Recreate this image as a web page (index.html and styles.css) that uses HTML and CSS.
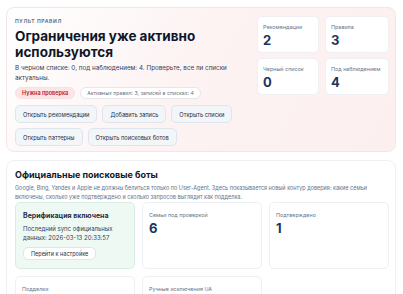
FILE: index.html
```html
<!DOCTYPE html>
<html lang="ru">
<head>
  <meta charset="UTF-8">
  <title>Пульт правил</title>
  <link rel="stylesheet" href="styles.css">
</head>
<body>
  <section class="hero">
    <div class="hero-main">
      <div class="eyebrow">Пульт правил</div>
      <h1>Ограничения уже активно используются</h1>
      <p class="lead">В черном списке: 0, под наблюдением: 4. Проверьте, все ли списки актуальны.</p>
      <div class="badges">
        <span class="badge warn">Нужна проверка</span>
        <span class="badge">Активных правил: 3, записей в списках: 4</span>
      </div>
      <div class="actions">
        <button class="btn">Открыть рекомендации</button>
        <button class="btn">Добавить запись</button>
        <button class="btn">Открыть списки</button>
        <button class="btn">Открыть паттерны</button>
        <button class="btn">Открыть поисковых ботов</button>
      </div>
    </div>
    <div class="stats">
      <div class="stat"><span class="stat-label">Рекомендации</span><span class="stat-value">2</span></div>
      <div class="stat"><span class="stat-label">Правила</span><span class="stat-value">3</span></div>
      <div class="stat"><span class="stat-label">Черный список</span><span class="stat-value">0</span></div>
      <div class="stat"><span class="stat-label">Под наблюдением</span><span class="stat-value">4</span></div>
    </div>
  </section>

  <section class="panel">
    <h2>Официальные поисковые боты</h2>
    <p class="desc">Google, Bing, Yandex и Apple не должны белиться только по User-Agent. Здесь показывается новый контур доверия: какие семьи включены, сколько уже подтверждено и сколько запросов выглядит как подделка.</p>
    <div class="bot-grid">
      <div class="tile ok">
        <h3>Верификация включена</h3>
        <p class="tile-text">Последний sync официальных данных: 2026-03-13 20:33:57</p>
        <button class="btn btn-white">Перейти к настройке</button>
      </div>
      <div class="tile"><span class="stat-label">Семьи под проверкой</span><span class="stat-value">6</span></div>
      <div class="tile"><span class="stat-label">Подтверждено</span><span class="stat-value">1</span></div>
      <div class="tile"><span class="stat-label">Подделки</span></div>
      <div class="tile"><span class="stat-label">Ручные исключения UA</span></div>
    </div>
  </section>
</body>
</html>
```

FILE: styles.css
```css
  body {
    margin: 0;
    padding: 7px 7px 7px 6px;
    background: #fff;
    font-family: Inter, "Noto Sans", sans-serif;
    color: #111827;
  }

  .hero {
    display: flex;
    gap: 8px;
    padding: 8px 6px 5px 8px;
    border: 1px solid #f3e6e6;
    border-radius: 8px;
    background: linear-gradient(120deg, #ffffff 0%, #fdf3f3 45%, #fcefef 100%);
  }

  .hero-main {
    flex: 1;
  }

  .eyebrow {
    margin-top: 1px;
    font-size: 5px;
    line-height: 8px;
    font-weight: 700;
    letter-spacing: 0.12em;
    text-transform: uppercase;
    color: #6b7280;
  }

  h1 {
    margin: 3px 0 0 0;
    font-size: 13.5px;
    line-height: 16px;
    font-weight: 700;
    color: #0f172a;
  }

  .lead {
    margin: 3px 0 0 0;
    font-size: 6.3px;
    line-height: 10px;
    color: #334155;
  }

  .badges {
    display: flex;
    gap: 5px;
    margin-top: 4px;
  }

  .badge {
    height: 12px;
    padding: 0 6px;
    border: 1px solid #e5e7eb;
    border-radius: 6px;
    background: #fff;
    font-size: 5.2px;
    line-height: 11px;
    color: #6b7280;
    box-sizing: border-box;
  }

  .badge.warn {
    border-color: #fbe0e3;
    background: #fde4e7;
    font-size: 5.5px;
    font-weight: 600;
    color: #b4232f;
  }

  .actions {
    display: flex;
    flex-wrap: wrap;
    gap: 5px;
    margin-top: 6px;
  }

  .btn {
    height: 18px;
    padding: 0 7px;
    border: 1px solid #dfe5ec;
    border-radius: 5px;
    background: #f3f6f9;
    font-family: inherit;
    font-size: 5.7px;
    color: #1f2f45;
    cursor: pointer;
  }

  .stats {
    display: grid;
    grid-template-columns: 62px 64px;
    grid-template-rows: 37px 37px;
    gap: 5px 6px;
    align-self: flex-start;
  }

  .stat, .tile {
    display: flex;
    flex-direction: column;
    padding: 7px 6px;
    border: 1px solid #eef0f3;
    border-radius: 5px;
    background: #fff;
    box-sizing: border-box;
  }

  .stat {
    padding: 6px 5px;
  }

  .stat-label {
    font-size: 5.4px;
    line-height: 8px;
    white-space: nowrap;
    color: #64748b;
  }

  .stat-value {
    margin-top: 2px;
    font-size: 13px;
    line-height: 15px;
    font-weight: 700;
    color: #1b365d;
  }

  .panel {
    margin-top: 8px;
    padding: 8px 7px 8px 8px;
    border: 1px solid #eef0f3;
    border-radius: 8px;
    background: #fff;
  }

  h2 {
    margin: 0;
    font-size: 9px;
    line-height: 12px;
    font-weight: 700;
    color: #0f172a;
  }

  .desc {
    margin: 3px 0 0 0;
    font-size: 5.5px;
    line-height: 8.5px;
    color: #64748b;
  }

  .bot-grid {
    display: grid;
    grid-template-columns: repeat(3, 120px);
    grid-template-rows: 67px 40px;
    gap: 7px;
    margin-top: 1px;
  }

  .tile {
    padding: 8px 6px;
  }

  .tile.ok {
    padding: 8px 7px;
    border-color: #d8eee2;
    background: #eff9f3;
  }

  h3 {
    margin: 0;
    font-size: 7px;
    line-height: 10px;
    font-weight: 700;
    color: #1b2f4a;
  }

  .tile-text {
    margin: 3px 0 0 0;
    font-size: 6px;
    line-height: 9px;
    color: #334155;
  }

  .btn-white {
    align-self: flex-start;
    height: 17px;
    margin-top: 5px;
    padding: 0 7px;
    font-size: 5.5px;
    background: #fff;
  }
```
